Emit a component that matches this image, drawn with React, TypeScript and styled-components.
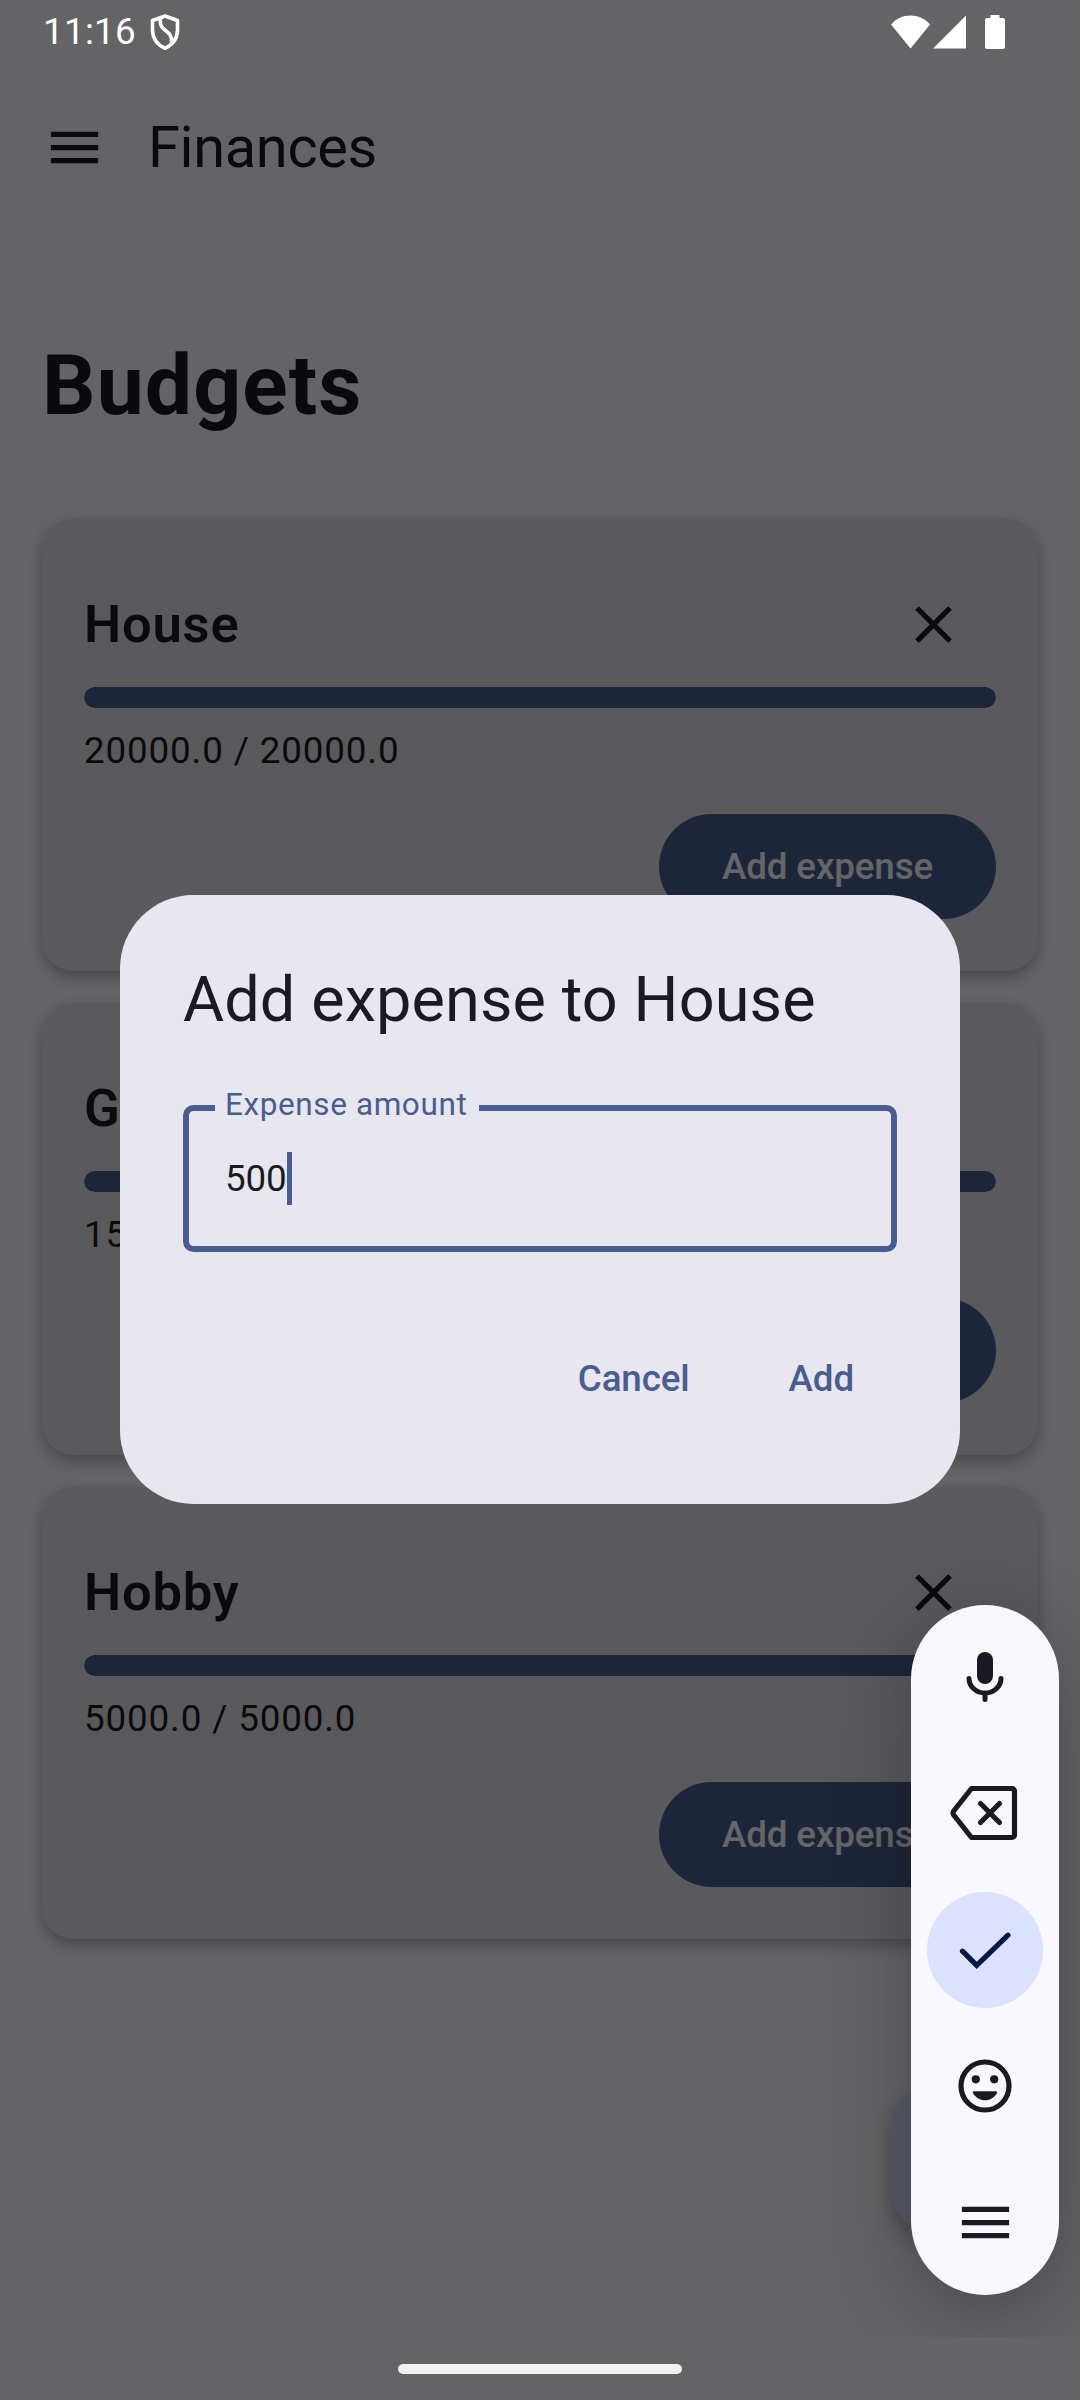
import React from 'react';
import styled, { createGlobalStyle } from 'styled-components';

const GlobalStyle = createGlobalStyle`
  *, *::before, *::after { box-sizing: border-box; }
  body { margin: 0; background: #faf8ff; }
  button, input { font: inherit; border: 0; background: none; padding: 0; margin: 0; color: inherit; }
`;

const Screen = styled.div`
  position: relative;
  width: 1080px;
  height: 2400px;
  overflow: hidden;
  background: #faf8ff;
  color: #1a1b20;
  font-family: Roboto, sans-serif;
  font-size: 36.75px;
  line-height: 52px;
`;

const Page = styled.div`
  display: flex;
  flex-direction: column;
  height: 100%;
  padding-top: 63px;
`;

const AppBar = styled.header`
  display: flex;
  align-items: center;
  height: 168px;
  padding-left: 43px;
  gap: 42px;
`;

const AppTitle = styled.div`
  font-size: 57.75px;
  line-height: 74px;
  letter-spacing: -0.35px;
`;

const Heading = styled.h1`
  margin: 101px 42px 79px;
  font-size: 84px;
  line-height: 108px;
  font-weight: 700;
  letter-spacing: 1.1px;
`;

const CardList = styled.main`
  display: flex;
  flex-direction: column;
  gap: 32px;
  padding: 0 42px;
`;

const Card = styled.section`
  display: flex;
  flex-direction: column;
  height: 452px;
  padding: 42px;
  border-radius: 31.5px;
  background: #e2e2e9;
  box-shadow: 0 8px 16px rgba(0, 0, 0, 0.18), 0 3px 14px rgba(0, 0, 0, 0.12);
`;

const CardHeader = styled.div`
  display: flex;
  align-items: center;
  justify-content: space-between;
  height: 126px;
`;

const CardTitle = styled.h2`
  margin: 0;
  font-size: 52.5px;
  line-height: 74px;
  font-weight: 600;
  letter-spacing: 0.8px;
`;

const IconButton = styled.button`
  display: grid;
  place-items: center;
  width: 126px;
  height: 126px;
`;

const Track = styled.div`
  height: 21px;
  border-radius: 10.5px;
  background: #dae2ff;
  overflow: hidden;
`;

const Fill = styled.div`
  height: 100%;
  border-radius: 10.5px;
  background: #495d92;
`;

const Amount = styled.div`
  margin-top: 17px;
  letter-spacing: 0.87px;
`;

const CardFooter = styled.div`
  display: flex;
  justify-content: flex-end;
  margin-top: auto;
  padding-bottom: 10px;
`;

const FilledButton = styled.button`
  width: 337px;
  height: 105px;
  border-radius: 52.5px;
  background: #495d92;
  color: #fff;
  font-weight: 500;
  letter-spacing: -0.12px;
`;

const Fab = styled.div`
  position: absolute;
  left: 891px;
  top: 2085px;
  width: 147px;
  height: 147px;
  border-radius: 42px;
  background: #dae2ff;
  box-shadow: 0 10px 20px rgba(0, 0, 0, 0.25);
`;

const Scrim = styled.div`
  position: absolute;
  inset: 0;
  background: rgba(0, 0, 0, 0.6);
`;

const StatusBar = styled.div`
  position: absolute;
  inset: 0 0 auto 0;
  display: flex;
  align-items: center;
  justify-content: space-between;
  height: 63px;
  padding: 0 75px 0 43px;
  color: #fff;
`;

const StatusGroup = styled.div<{ $gap: number }>`
  display: flex;
  align-items: center;
  gap: ${(p) => p.$gap}px;
`;

const Clock = styled.span`
  letter-spacing: 0.3px;
`;

const Dialog = styled.div`
  position: absolute;
  left: 120px;
  top: 895px;
  display: flex;
  flex-direction: column;
  width: 840px;
  height: 609px;
  padding: 63px;
  border-radius: 73.5px;
  background: #e8e7ef;
`;

const DialogTitle = styled.div`
  font-size: 63px;
  line-height: 84px;
  letter-spacing: 0.1px;
`;

const Field = styled.label`
  position: relative;
  display: flex;
  align-items: center;
  height: 147px;
  margin-top: 63px;
  padding-left: 36px;
  border: 6px solid #495d92;
  border-radius: 10.5px;
`;

const FieldLabel = styled.span`
  position: absolute;
  left: 26px;
  top: -27px;
  width: 264px;
  padding-left: 10px;
  background: #e8e7ef;
  color: #495d92;
  font-size: 31.5px;
  line-height: 42px;
  letter-spacing: 0.6px;
  white-space: nowrap;
`;

const Value = styled.span`
  letter-spacing: -0.15px;
`;

const Caret = styled.span`
  width: 5px;
  height: 53px;
  background: #495d92;
`;

const DialogActions = styled.div`
  display: flex;
  justify-content: flex-end;
  margin-top: 74px;
  gap: 14px;
`;

const TextButton = styled.button`
  height: 105px;
  padding: 0 43px 0 42px;
  color: #495d92;
  font-weight: 500;
  letter-spacing: -0.12px;
`;

const InputLayer = styled.div`
  position: absolute;
  inset: 0 0 63px 0;
  overflow: hidden;
`;

const Toolbar = styled.div`
  position: absolute;
  left: 911px;
  top: 1605px;
  display: flex;
  flex-direction: column;
  align-items: center;
  gap: 20.25px;
  width: 148px;
  height: 690px;
  padding-top: 14px;
  border-radius: 74px;
  background: #faf8ff;
  box-shadow: 0 18px 80px rgba(0, 0, 0, 0.28);
`;

const ToolKey = styled.button<{ $active?: boolean }>`
  display: grid;
  place-items: center;
  flex: none;
  width: 116px;
  height: 116px;
  border-radius: 50%;
  color: ${(p) => (p.$active ? '#001847' : '#1a1b20')};
  background: ${(p) => (p.$active ? '#dae2ff' : 'transparent')};
`;

const NavHandle = styled.div`
  position: absolute;
  left: 398px;
  top: 2364px;
  width: 284px;
  height: 10px;
  border-radius: 5px;
  background: #f2f2f2;
`;

const MenuIcon = () => (
  <svg width="63" height="63" viewBox="0 0 24 24" fill="currentColor">
    <path d="M3 18h18v-2H3zm0-5h18v-2H3zm0-7v2h18V6z" />
  </svg>
);

const CloseIcon = () => (
  <svg width="63" height="63" viewBox="0 0 24 24" fill="currentColor">
    <path d="M19 6.41 17.59 5 12 10.59 6.41 5 5 6.41 10.59 12 5 17.59 6.41 19 12 13.41 17.59 19 19 17.59 13.41 12z" />
  </svg>
);

const ShieldIcon = () => (
  <svg width="32" height="38" viewBox="0 0 32 38" fill="none" stroke="#fff" strokeWidth="3.6" strokeLinejoin="round">
    <path d="M16 3 28.500 7.500V17c0 8-4.500 14.500-12.500 18.300C8 31.500 3.500 25 3.500 17V7.500z" />
    <path d="M11.500 5c-1 7 1 9.500 5 12.500s6.500 5.500 6 12" />
  </svg>
);

const WifiIcon = () => (
  <svg width="39" height="34" viewBox="0 0 39 34" fill="#fff">
    <path d="M19.500 33.500 0 9.500C5 3.500 12 .5 19.500.5S34 3.500 39 9.500z" />
  </svg>
);

const SignalIcon = () => (
  <svg width="52" height="34" viewBox="0 0 52 34" fill="#fff">
    <path d="M0 33.500 33 .5v33z" />
  </svg>
);

const BatteryIcon = () => (
  <svg width="20" height="34" viewBox="0 0 20 34" fill="#fff">
    <path d="M5.500 0h9v3H18a2 2 0 0 1 2 2v27a2 2 0 0 1-2 2H2a2 2 0 0 1-2-2V5a2 2 0 0 1 2-2h3.500z" />
  </svg>
);

const MicIcon = () => (
  <svg width="38" height="50" viewBox="0 0 38 50">
    <rect x="11" y="0" width="16" height="32" rx="8" fill="currentColor" />
    <path d="M3 26.500a16 14.500 0 0 0 32 0M19 41v6.500" fill="none" stroke="currentColor" strokeWidth="5" strokeLinecap="round" />
  </svg>
);

const BackspaceIcon = () => (
  <svg width="70" height="56" viewBox="0 0 70 56" fill="none" stroke="currentColor" strokeWidth="5.200" strokeLinecap="round" strokeLinejoin="round">
    <path d="M21.500 3.500H62a2.500 2.500 0 0 1 2.500 2.500v44a2.500 2.500 0 0 1-2.500 2.500H21.500L3.700 30Q2.400 28 3.700 26z" />
    <path d="m30.500 18.500 19 19m0-19-19 19" />
  </svg>
);

const CheckIcon = () => (
  <svg width="52" height="38" viewBox="0 0 52 38" fill="none" stroke="currentColor" strokeWidth="5.200" strokeLinecap="round" strokeLinejoin="miter">
    <path d="m3.500 20.200 14.200 14.200L49 4.200" />
  </svg>
);

const SmileIcon = () => (
  <svg width="54" height="54" viewBox="0 0 54 54">
    <circle cx="27" cy="27" r="24" fill="none" stroke="currentColor" strokeWidth="5.200" />
    <circle cx="17.800" cy="20.300" r="4.100" fill="currentColor" />
    <circle cx="36.200" cy="20.300" r="4.100" fill="currentColor" />
    <path d="M16 32.200h22q1.800 0 1.200 1.800C36.500 38.500 32 41.300 27 41.300S17.500 38.500 14.800 34q-.6-1.800 1.200-1.800z" fill="currentColor" />
  </svg>
);

const budgets = [
  { name: 'House', left: 20000, total: 20000 },
  { name: 'Groceries', left: 15000, total: 15000 },
  { name: 'Hobby', left: 5000, total: 5000 },
];

const BudgetCard = ({ name, left, total }: { name: string; left: number; total: number }) => (
  <Card>
    <CardHeader>
      <CardTitle>{name}</CardTitle>
      <IconButton aria-label="Delete"><CloseIcon /></IconButton>
    </CardHeader>
    <Track><Fill style={{ width: `${(left / total) * 100}%` }} /></Track>
    <Amount>{left.toFixed(1)} / {total.toFixed(1)}</Amount>
    <CardFooter><FilledButton>Add expense</FilledButton></CardFooter>
  </Card>
);

export default function App() {
  return (
    <Screen>
      <GlobalStyle />
      <Page>
        <AppBar>
          <MenuIcon />
          <AppTitle>Finances</AppTitle>
        </AppBar>
        <Heading>Budgets</Heading>
        <CardList>
          {budgets.map((b) => <BudgetCard key={b.name} {...b} />)}
        </CardList>
      </Page>
      <Fab />
      <Scrim />
      <StatusBar>
        <StatusGroup $gap={13}>
          <Clock>11:16</Clock>
          <ShieldIcon />
        </StatusGroup>
        <StatusGroup $gap={0}>
          <StatusGroup $gap={3}>
            <WifiIcon />
            <SignalIcon />
          </StatusGroup>
          <BatteryIcon />
        </StatusGroup>
      </StatusBar>
      <Dialog role="dialog">
        <DialogTitle>Add expense to House</DialogTitle>
        <Field>
          <FieldLabel>Expense amount</FieldLabel>
          <Value>500</Value>
          <Caret />
        </Field>
        <DialogActions>
          <TextButton>Cancel</TextButton>
          <TextButton>Add</TextButton>
        </DialogActions>
      </Dialog>
      <InputLayer>
        <Toolbar>
          <ToolKey><MicIcon /></ToolKey>
          <ToolKey><BackspaceIcon /></ToolKey>
          <ToolKey $active><CheckIcon /></ToolKey>
          <ToolKey><SmileIcon /></ToolKey>
          <ToolKey><MenuIcon /></ToolKey>
        </Toolbar>
      </InputLayer>
      <NavHandle />
    </Screen>
  );
}
